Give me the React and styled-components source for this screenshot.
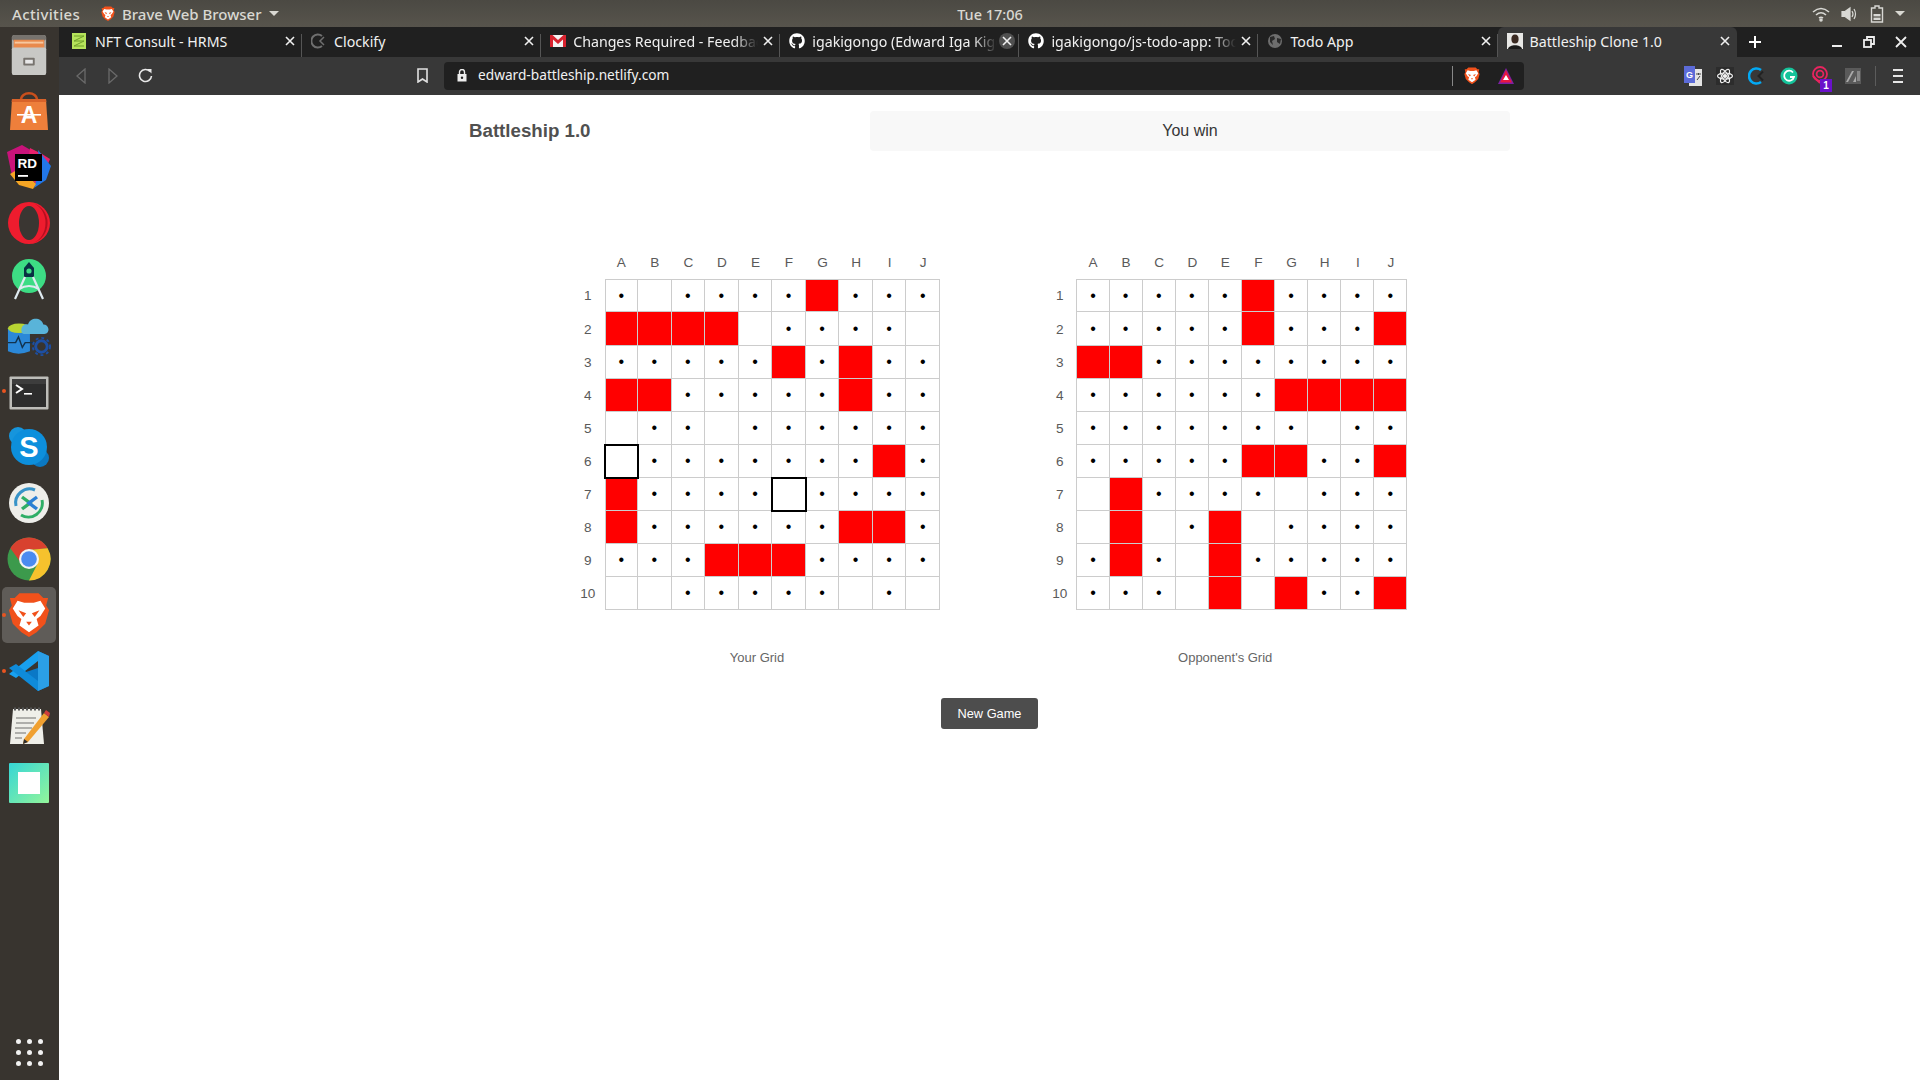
import React from 'react';
import styled, { createGlobalStyle } from 'styled-components';
import { FaGithub } from 'react-icons/fa';

const UI_FONT = '"Noto Sans", "Open Sans", sans-serif';
const PAGE_FONT = '"Liberation Sans", Arial, sans-serif';

const GlobalStyle = createGlobalStyle`
  html, body {
    margin: 0;
    padding: 0;
    width: 1920px;
    height: 1080px;
    overflow: hidden;
    background: #fff;
  }
  * {
    box-sizing: border-box;
  }
`;

// d = dot (a miss), _ = untouched, r = hit, b = black outlined cell
const YOUR_GRID = [
  'd_ddddrddd',
  'rrrr_dddd_',
  'dddddrdrdd',
  'rrdddddrdd',
  '_dd_dddddd',
  'bdddddddrd',
  'rddddbdddd',
  'rddddddrrd',
  'dddrrrdddd',
  '__ddddd_d_',
];

const OPPONENT_GRID = [
  'dddddrdddd',
  'dddddrdddr',
  'rrdddddddd',
  'ddddddrrrr',
  'ddddddd_dd',
  'dddddrrddr',
  '_rdddd_ddd',
  '_r_dr_dddd',
  'drd_rddddd',
  'ddd_r_rddr',
];

const COLUMNS = ['A', 'B', 'C', 'D', 'E', 'F', 'G', 'H', 'I', 'J'];

/* ---------- dock icons ---------- */

const FilesIcon = () => (
  <svg width="40" height="42" viewBox="0 0 42 44">
    <rect x="3" y="1" width="36" height="42" rx="3" fill="#a9a9a6" />
    <rect x="3" y="1" width="36" height="6" rx="3" fill="#77736e" />
    <rect x="5" y="6" width="32" height="9" fill="#e98a4d" />
    <rect x="6" y="8" width="30" height="2" fill="#f7c8a0" />
    <rect x="3" y="14" width="36" height="29" rx="2" fill="#c8c8c5" />
    <rect x="15" y="25" width="12" height="8" rx="1" fill="#77736e" />
    <rect x="17" y="27" width="8" height="4" fill="#e8e8e8" />
  </svg>
);

const StoreIcon = () => (
  <svg width="42" height="42" viewBox="0 0 42 42">
    <path d="M13 10 C13 1 29 1 29 10" fill="none" stroke="#c94f1c" strokeWidth="2.5" />
    <path d="M4 9 H38 L40 40 H2 Z" fill="#ee7f3b" />
    <path d="M4 9 H38 L38.4 12 H3.6 Z" fill="#d9632a" />
    <text x="21" y="33" textAnchor="middle" fontFamily={PAGE_FONT} fontWeight="700" fontSize="23" fill="#fff">A</text>
    <rect x="9" y="24" width="24" height="1.6" fill="#fff" />
  </svg>
);

const RiderIcon = () => (
  <svg width="46" height="46" viewBox="0 0 46 46">
    <polygon points="1,8 16,1 28,8 12,30 6,32" fill="#c9137a" />
    <polygon points="24,4 36,10 44,15 38,30 30,40 20,30" fill="#e8206c" />
    <polygon points="32,6 45,22 40,36 28,44 34,24" fill="#2277e8" />
    <polygon points="4,30 14,24 30,40 27,45 13,41" fill="#f5a524" />
    <rect x="9" y="10" width="27" height="27" fill="#000" />
    <text x="11.5" y="24" fontFamily={PAGE_FONT} fontWeight="700" fontSize="13.5" fill="#fff">RD</text>
    <rect x="12" y="31" width="10" height="1.8" fill="#fff" />
  </svg>
);

const OperaIcon = () => (
  <svg width="44" height="44" viewBox="0 0 44 44">
    <circle cx="22" cy="22" r="21" fill="#ee1c2e" />
    <ellipse cx="22" cy="22" rx="10" ry="17" fill="#3a3632" />
    <path d="M26 2 A21 21 0 0 1 26 42 A18 21 0 0 0 26 2 Z" fill="#b50f20" />
  </svg>
);

const AndroidIcon = () => (
  <svg width="42" height="42" viewBox="0 0 42 42">
    <circle cx="21" cy="18" r="17" fill="#3ddc84" />
    <path d="M16 10 L21 4 L26 10 V19 H16 Z" fill="#083042" />
    <circle cx="21" cy="13" r="2.6" fill="#3ddc84" />
    <path d="M17 19 L7 41 M25 19 L35 41 M11 31 Q21 25 31 31" stroke="#dfeaf0" strokeWidth="2.2" fill="none" />
  </svg>
);

const AzureIcon = () => (
  <svg width="44" height="44" viewBox="0 0 46 46">
    <path d="M1 16 H24 V40 Q12 45 1 40 Z" fill="#2b88d8" />
    <ellipse cx="12.5" cy="16" rx="11.5" ry="5" fill="#b8d432" />
    <path d="M15 18 C15 12 20 11 22 12 C24 4 36 4 38 12 C44 12 46 21 39 22 H18 C16 22 15 20 15 18 Z" fill="#59b4d9" />
    <path d="M1 31 H9 L12 25 L16 36 L19 31 H28" stroke="#12324d" strokeWidth="1.5" fill="none" />
    <circle cx="36" cy="35" r="6" fill="none" stroke="#1d4fa3" strokeWidth="3" />
    <circle cx="36" cy="35" r="9" fill="none" stroke="#1d4fa3" strokeWidth="2" strokeDasharray="3 3" />
  </svg>
);

const TerminalIcon = () => (
  <svg width="40" height="38" viewBox="0 -4 40 38">
    <rect x="0.5" y="0.5" width="39" height="33" rx="1" fill="#bdbdb9" />
    <rect x="3" y="3" width="34" height="28" fill="#2d2d2d" />
    <rect x="3" y="3" width="34" height="5" fill="#3d3d3d" />
    <path d="M7 9 L13 13 L7 17" stroke="#fff" strokeWidth="2" fill="none" />
    <rect x="15" y="17" width="8" height="1.6" fill="#fff" />
  </svg>
);

const SkypeIcon = () => (
  <svg width="42" height="42" viewBox="0 0 42 42">
    <circle cx="10" cy="10" r="9" fill="#1695dd" />
    <circle cx="32" cy="32" r="9" fill="#0a78c2" />
    <circle cx="21" cy="21" r="18" fill="#0d8fdc" />
    <text x="21" y="31" textAnchor="middle" fontFamily={PAGE_FONT} fontWeight="700" fontSize="29" fill="#fff">S</text>
  </svg>
);

const RemoteIcon = () => (
  <svg width="42" height="42" viewBox="0 0 42 42">
    <circle cx="21" cy="21" r="20" fill="#eeeeea" />
    <path d="M8 24 A14 14 0 0 1 27 8" fill="none" stroke="#3793c8" strokeWidth="3" />
    <path d="M34 18 A14 14 0 0 1 13 33" fill="none" stroke="#2fae66" strokeWidth="3" />
    <path d="M14 15 L22 21 L14 27" fill="none" stroke="#2fae66" strokeWidth="3.4" />
    <path d="M29 15 L21 21 L29 27" fill="none" stroke="#2b7fd4" strokeWidth="3.4" />
  </svg>
);

const ChromeIcon = () => (
  <svg width="44" height="44" viewBox="0 0 44 44">
    <circle cx="22" cy="22" r="21.5" fill="#3c9a4c" />
    <path d="M3.4 11.2 A21.5 21.5 0 0 1 40.6 11.2 L22 13 Z M3.4 11.2 L14 26 L22 13 Z" fill="#d8412f" />
    <path d="M40.6 11.2 A21.5 21.5 0 0 1 22 43.5 L30 28 L22 13 Z" fill="#f6c22d" />
    <circle cx="22" cy="22" r="10" fill="#f3f3f3" />
    <circle cx="22" cy="22" r="7.8" fill="#4b8bf0" />
  </svg>
);

const BraveLogo = ({ size }) => (
  <svg width={size} height={size * 1.1} viewBox="0 0 44 48">
    <path d="M12 1 H32 L37 6 L42 6 L40 14 L43 19 L39 33 L30 42 L22 47 L14 42 L5 33 L1 19 L4 14 L2 6 L7 6 Z" fill="#f1511b" />
    <path d="M10 9 L17 11 H27 L34 9 L39 17 L34 25 L30 28 L32 35 L22 42 L12 35 L14 28 L10 25 L5 17 Z" fill="#fff" />
    <path d="M11 19 L19 22 L16 26 Z M33 19 L25 22 L28 26 Z M19 31 H25 L22 35 Z" fill="#f1511b" />
  </svg>
);

const VsCodeIcon = () => (
  <svg width="42" height="42" viewBox="0 0 42 42">
    <path d="M30 1 L41 6 V36 L30 41 L12 24 L30 18 Z" fill="#0a78c6" />
    <path d="M30 1 L41 6 V36 L30 41 V1 Z" fill="#2b9fe6" />
    <path d="M30 1 V11 L8 28 L1 24 Z" fill="#18a0ef" />
    <path d="M30 41 V31 L8 14 L1 18 Z" fill="#0f8bda" />
  </svg>
);

const NotepadIcon = () => (
  <svg width="42" height="42" viewBox="0 0 42 42">
    <path d="M5 3 H33 L36 38 H2 Z" fill="#efefe9" />
    <path d="M6 3 H33" stroke="#555" strokeWidth="3" strokeDasharray="2 2" />
    <path d="M8 12 H28 M8 17 H26 M7 22 H24 M7 27 H18 M7 32 H14" stroke="#9b9b96" strokeWidth="1.4" />
    <path d="M16 33 L36 7 L41 11 L20 36 L15 38 Z" fill="#f0a030" />
    <path d="M36 7 L38 4 L42 7 L41 11 Z" fill="#d13c3c" />
    <path d="M16 33 L15 38 L20 36 Z" fill="#2e2e2e" />
  </svg>
);

const MintIcon = () => (
  <svg width="40" height="40" viewBox="0 0 40 40">
    <defs>
      <linearGradient id="mint" x1="0" y1="0" x2="1" y2="1">
        <stop offset="0" stopColor="#35d6d6" />
        <stop offset="1" stopColor="#93f59a" />
      </linearGradient>
    </defs>
    <rect width="40" height="40" rx="1" fill="url(#mint)" />
    <rect x="9" y="9" width="22" height="22" fill="#fff" />
  </svg>
);

const DOCK_APPS = [
  { key: 'files', icon: <FilesIcon /> },
  { key: 'store', icon: <StoreIcon /> },
  { key: 'rider', icon: <RiderIcon /> },
  { key: 'opera', icon: <OperaIcon /> },
  { key: 'android', icon: <AndroidIcon /> },
  { key: 'azure', icon: <AzureIcon /> },
  { key: 'terminal', icon: <TerminalIcon />, running: true },
  { key: 'skype', icon: <SkypeIcon /> },
  { key: 'remote', icon: <RemoteIcon /> },
  { key: 'chrome', icon: <ChromeIcon /> },
  { key: 'brave', icon: <BraveLogo size={42} />, running: true, active: true },
  { key: 'vscode', icon: <VsCodeIcon />, running: true },
  { key: 'notepad', icon: <NotepadIcon /> },
  { key: 'mint', icon: <MintIcon /> },
];

/* ---------- tab favicons ---------- */

const NftFavicon = () => (
  <svg width="15" height="16" viewBox="0 0 15 16">
    <rect width="14" height="16" fill="#b6e35b" />
    <path d="M2 3 H12 L2 8 H12 L2 13 H12" stroke="#6f9e2a" strokeWidth="1" fill="none" />
  </svg>
);

const ClockifyFavicon = () => (
  <svg width="16" height="16" viewBox="0 0 16 16">
    <path d="M11 3 A6.5 6.5 0 1 0 11 13" fill="none" stroke="#6f6f6f" strokeWidth="2" />
    <path d="M13 4 L9 8 L13 12" fill="none" stroke="#6f6f6f" strokeWidth="1.5" />
  </svg>
);

const GmailFavicon = () => (
  <svg width="16" height="14" viewBox="0 0 16 14">
    <rect y="1" width="16" height="12" fill="#f4f4f4" />
    <path d="M0 1 H2.5 L8 6 L13.5 1 H16 V13 H13 V5.5 L8 10 L3 5.5 V13 H0 Z" fill="#d8232f" />
  </svg>
);

const GlobeFavicon = () => (
  <svg width="16" height="16" viewBox="0 0 16 16">
    <circle cx="8" cy="8" r="7" fill="#6e6e6e" />
    <path d="M3 4 L7 3 L8 6 L5 8 L6 12 L3 9 Z M10 5 L14 6 L13 11 L10 9 Z" fill="#2a2a2a" />
  </svg>
);

const PersonFavicon = () => (
  <svg width="16" height="16" viewBox="0 0 16 16">
    <rect width="16" height="16" fill="#e8e8e6" />
    <ellipse cx="8" cy="6" rx="3.6" ry="4.5" fill="#3a2a22" />
    <path d="M1 16 C2 11 14 11 15 16 Z" fill="#1b1b1b" />
  </svg>
);

const GithubFavicon = styled(FaGithub)`
  width: 16px;
  height: 16px;
  color: #fff;
`;

const TABS = [
  { key: 1, title: 'NFT Consult - HRMS', icon: <NftFavicon /> },
  { key: 2, title: 'Clockify', icon: <ClockifyFavicon /> },
  { key: 3, title: 'Changes Required - Feedback', icon: <GmailFavicon />, fade: true },
  { key: 4, title: 'igakigongo (Edward Iga Kigongo)', icon: <GithubFavicon />, fade: true, hover: true },
  { key: 5, title: 'igakigongo/js-todo-app: Todo App', icon: <GithubFavicon />, fade: true },
  { key: 6, title: 'Todo App', icon: <GlobeFavicon /> },
  { key: 7, title: 'Battleship Clone 1.0', icon: <PersonFavicon />, active: true },
];

/* ---------- small toolbar glyphs ---------- */

const Line = ({ w = 16, h = 16, children, color = '#e6e6e6', sw = 1.5 }) => (
  <svg width={w} height={h} viewBox={`0 0 ${w} ${h}`} fill="none" stroke={color} strokeWidth={sw}>
    {children}
  </svg>
);

const TranslateIcon = () => (
  <svg width="18" height="20" viewBox="0 0 18 20">
    <rect x="5" y="3" width="13" height="17" fill="#e4e4e4" />
    <rect width="11" height="17" fill="#5c6bd8" />
    <text x="5.5" y="12" textAnchor="middle" fontFamily={PAGE_FONT} fontWeight="700" fontSize="9" fill="#fff">G</text>
    <path d="M12 8 H17 M14.5 7 V9 M13 14 L16 10" stroke="#444" strokeWidth="1" />
  </svg>
);

const ReactIcon = () => (
  <svg width="18" height="18" viewBox="0 0 18 18" fill="none" stroke="#f0f0f0" strokeWidth="1.2">
    <rect x="0" y="0" width="18" height="18" fill="#2c2c2c" stroke="none" />
    <ellipse cx="9" cy="9" rx="7.5" ry="3" />
    <ellipse cx="9" cy="9" rx="7.5" ry="3" transform="rotate(60 9 9)" />
    <ellipse cx="9" cy="9" rx="7.5" ry="3" transform="rotate(120 9 9)" />
    <circle cx="9" cy="9" r="1.5" fill="#f0f0f0" />
  </svg>
);

const ClockifyExt = () => (
  <svg width="18" height="18" viewBox="0 0 18 18">
    <path d="M13 3 A7.5 7.5 0 1 0 13 15" fill="none" stroke="#03a9f4" strokeWidth="2.6" />
    <path d="M15 4.5 L10.5 9 L15 13.5" fill="none" stroke="#222" strokeWidth="2" />
  </svg>
);

const GrammarlyExt = () => (
  <svg width="18" height="18" viewBox="0 0 18 18">
    <circle cx="9" cy="9" r="8.5" fill="#15c39a" />
    <path d="M13 5.5 A5 5 0 1 0 14 10 H10" fill="none" stroke="#fff" strokeWidth="1.8" />
  </svg>
);

const PinkExt = () => (
  <svg width="20" height="20" viewBox="0 0 20 20" fill="none" stroke="#e8245f" strokeWidth="1.8">
    <circle cx="9" cy="8" r="7" />
    <circle cx="9" cy="8" r="3.4" />
    <path d="M2 10 L9 17" />
  </svg>
);

const GrayExt = () => (
  <svg width="16" height="16" viewBox="0 0 16 16">
    <rect width="16" height="16" fill="#5a5a5a" />
    <path d="M1 14 L7 3 H9 L3 14 Z M8 14 L11 8 V14 Z" fill="#aaa" />
    <rect x="12" y="3" width="3" height="10" fill="#888" />
  </svg>
);

const EXTENSIONS = [
  { key: 'translate', icon: <TranslateIcon /> },
  { key: 'react', icon: <ReactIcon /> },
  { key: 'clockify', icon: <ClockifyExt /> },
  { key: 'grammarly', icon: <GrammarlyExt /> },
  { key: 'pink', icon: <PinkExt />, badge: '1' },
  { key: 'gray', icon: <GrayExt /> },
];

/* ---------- game board ---------- */

const Board = ({ rows, cellWidth, caption, captionShift }) => (
  <BoardColumn>
    <BoardGrid $cell={cellWidth}>
      <span />
      {COLUMNS.map((c) => (
        <AxisLabel key={c}>{c}</AxisLabel>
      ))}
      {rows.map((row, y) => (
        <React.Fragment key={y}>
          <AxisLabel>{y + 1}</AxisLabel>
          {row.split('').map((kind, x) => (
            <Cell key={x} $kind={kind} $firstRow={y === 0} $firstCol={x === 0}>
              {kind === 'd' ? '•' : ''}
            </Cell>
          ))}
        </React.Fragment>
      ))}
    </BoardGrid>
    <Caption $shift={captionShift}>{caption}</Caption>
  </BoardColumn>
);

const App = () => (
  <Screen>
    <GlobalStyle />
    <TopBar>
      <TopLeft>
        <Activities>Activities</Activities>
        <AppMenu>
          <BraveLogo size={14} />
          Brave Web Browser
          <Caret />
        </AppMenu>
      </TopLeft>
      <Clock>Tue 17:06</Clock>
      <TopRight>
        <Line w={18} h={16} color="#d8d8d4" sw={1.6}>
          <path d="M1 6 Q9 -1 17 6 M4 9 Q9 4.5 14 9 M7 12 Q9 10.5 11 12" />
          <circle cx="9" cy="14" r="1" fill="#d8d8d4" />
        </Line>
        <Line w={18} h={16} color="#d8d8d4" sw={1.2}>
          <path d="M1 5.5 H4 L9 2 V14 L4 10.5 H1 Z" fill="#d8d8d4" />
          <path d="M11 5 Q13 8 11 11 M13 3 Q16 8 13 13" />
        </Line>
        <Line w={14} h={18} color="#d8d8d4" sw={1.4}>
          <path d="M5 1 H9 V3 H12.5 V17 H1.5 V3 H5 Z" />
          <rect x="3.5" y="9" width="7" height="2.4" fill="#d8d8d4" stroke="none" />
          <rect x="3.5" y="12.6" width="7" height="2.4" fill="#d8d8d4" stroke="none" />
        </Line>
        <Caret />
      </TopRight>
    </TopBar>
    <Desktop>
      <Dock>
        {DOCK_APPS.map((app) => (
          <DockItem key={app.key} $active={app.active}>
            {app.running && <RunningDot />}
            {app.icon}
          </DockItem>
        ))}
        <AppGrid>
          {Array.from({ length: 9 }).map((_, i) => (
            <GridDot key={i} />
          ))}
        </AppGrid>
      </Dock>
      <Browser>
        <TabStrip>
          {TABS.map((tab) => (
            <Tab key={tab.key} $active={tab.active}>
              <TabIcon>{tab.icon}</TabIcon>
              <TabTitle $fade={tab.fade}>{tab.title}</TabTitle>
              <TabClose $hover={tab.hover}>
                <Line w={10} h={10} color="#f0f0f0" sw={1.6}>
                  <path d="M1 1 L9 9 M9 1 L1 9" />
                </Line>
              </TabClose>
            </Tab>
          ))}
          <NewTab>
            <Line w={14} h={14} color="#fff" sw={2}>
              <path d="M7 1 V13 M1 7 H13" />
            </Line>
          </NewTab>
          <WindowControls>
            <WindowButton>
              <Line w={12} h={12} color="#eee" sw={2}>
                <path d="M1 10 H11" />
              </Line>
            </WindowButton>
            <WindowButton>
              <Line w={12} h={12} color="#eee" sw={1.8}>
                <rect x="1" y="4" width="7" height="7" fill="#202020" />
                <path d="M4 4 V1 H11 V8 H8" />
              </Line>
            </WindowButton>
            <WindowButton>
              <Line w={12} h={12} color="#eee" sw={1.8}>
                <path d="M1 1 L11 11 M11 1 L1 11" />
              </Line>
            </WindowButton>
          </WindowControls>
        </TabStrip>
        <Toolbar>
          <NavButton>
            <Line w={10} h={16} color="#6a6a6a" sw={1.3}>
              <path d="M9 1 L1 8 L9 15 Z" />
            </Line>
          </NavButton>
          <NavButton>
            <Line w={10} h={16} color="#6a6a6a" sw={1.3}>
              <path d="M1 1 L9 8 L1 15 Z" />
            </Line>
          </NavButton>
          <NavButton>
            <Line w={15} h={15} color="#e8e8e8" sw={1.6}>
              <path d="M12 3.5 A6 6 0 1 0 13.5 8" />
              <path d="M9 1 L13.5 1 L13.5 5.5 Z" fill="#e8e8e8" stroke="none" />
            </Line>
          </NavButton>
          <BookmarkButton>
            <Line w={11} h={15} color="#e0e0e0" sw={1.6}>
              <path d="M1 1 H10 V14 L5.5 11 L1 14 Z" />
            </Line>
          </BookmarkButton>
          <UrlBar>
            <UrlLeft>
              <Line w={10} h={13} color="#eee" sw={1.4}>
                <rect x="0.5" y="5" width="9" height="7.5" fill="#eee" stroke="none" />
                <path d="M2.5 5 V3 A2.5 2.5 0 0 1 7.5 3 V5" />
                <circle cx="5" cy="8.7" r="1.2" fill="#222" stroke="none" />
              </Line>
              <UrlText>edward-battleship.netlify.com</UrlText>
            </UrlLeft>
            <UrlRight>
              <UrlDivider />
              <BraveLogo size={16} />
              <svg width="18" height="18" viewBox="0 0 18 18">
                <polygon points="9,1 17,17 1,17" fill="#7b1fa2" />
                <polygon points="9,3 15,15.5 3,15.5" fill="#e8173f" />
                <polygon points="9,8 12,13 6,13" fill="#fff" />
              </svg>
            </UrlRight>
          </UrlBar>
          <Extensions>
            {EXTENSIONS.map((ext) => (
              <ExtButton key={ext.key}>
                {ext.icon}
                {ext.badge && <ExtBadge>{ext.badge}</ExtBadge>}
              </ExtButton>
            ))}
          </Extensions>
          <ToolbarDivider />
          <MenuButton>
            <MenuBar />
            <MenuBar />
            <MenuBar />
          </MenuButton>
        </Toolbar>
        <Page>
          <PageHeader>
            <Title>Battleship 1.0</Title>
            <Message>You win</Message>
          </PageHeader>
          <Boards>
            <Board rows={YOUR_GRID} cellWidth={33.55} caption="Your Grid" captionShift={3} />
            <Board rows={OPPONENT_GRID} cellWidth={33.1} caption="Opponent's Grid" captionShift={0} />
          </Boards>
          <Actions>
            <NewGameButton>New Game</NewGameButton>
          </Actions>
        </Page>
      </Browser>
    </Desktop>
  </Screen>
);

const Screen = styled.div`
  display: flex;
  flex-direction: column;
  width: 1920px;
  height: 1080px;
  overflow: hidden;
  font-family: ${UI_FONT};
`;

const TopBar = styled.header`
  display: flex;
  align-items: center;
  flex: 0 0 27px;
  padding: 0 12px;
  background: linear-gradient(#4b4943, #57544c);
  color: #d9d8d2;
  font-size: 15px;
  font-weight: 500;
`;

const TopLeft = styled.div`
  display: flex;
  align-items: center;
  gap: 21px;
  width: 945px;
`;

const Activities = styled.span`
  width: 68px;
  letter-spacing: 0.35px;
  white-space: nowrap;
`;

const AppMenu = styled.div`
  display: flex;
  align-items: center;
  gap: 7px;
`;

const Caret = styled.span`
  width: 0;
  height: 0;
  border-left: 5px solid transparent;
  border-right: 5px solid transparent;
  border-top: 5px solid #d9d8d2;
`;

const Clock = styled.div`
  width: 66px;
  font-size: 14.5px;
  text-align: center;
  white-space: nowrap;
`;

const TopRight = styled.div`
  display: flex;
  align-items: center;
  gap: 11px;
  margin-left: auto;
  padding-right: 3px;
`;

const Desktop = styled.div`
  display: flex;
  flex: 1;
  min-height: 0;
`;

const Dock = styled.nav`
  display: flex;
  flex-direction: column;
  flex: 0 0 59px;
  background: #38342f;
`;

const DockItem = styled.div`
  position: relative;
  display: flex;
  align-items: center;
  justify-content: center;
  flex: 0 0 56px;
  margin: 0 3px 0 2px;
  border-radius: 5px;
  background: ${(props) => (props.$active ? 'rgba(255, 255, 255, 0.2)' : 'transparent')};
`;

const RunningDot = styled.span`
  position: absolute;
  left: 0;
  top: 26px;
  width: 4px;
  height: 4px;
  border-radius: 50%;
  background: #e95420;
`;

const AppGrid = styled.div`
  display: grid;
  grid-template-columns: repeat(3, 5px);
  gap: 6px;
  justify-content: center;
  margin-top: auto;
  padding-bottom: 14px;
`;

const GridDot = styled.span`
  width: 5px;
  height: 5px;
  border-radius: 50%;
  background: #f2f2f2;
`;

const Browser = styled.div`
  display: flex;
  flex-direction: column;
  flex: 1;
  min-width: 0;
`;

const TabStrip = styled.div`
  display: flex;
  flex: 0 0 30px;
  padding-left: 4px;
  background: #202020;
`;

const Tab = styled.div`
  position: relative;
  display: flex;
  align-items: center;
  flex: 0 0 239.1px;
  min-width: 0;
  padding: 0 4px 2px 9px;
  border-radius: ${(props) => (props.$active ? '6px 6px 0 0' : '0')};
  background: ${(props) => (props.$active ? '#383838' : 'transparent')};
  color: #f1f1f1;
  font-size: 14.2px;
  &::after {
    content: '';
    position: absolute;
    right: 0;
    top: 7px;
    bottom: 0;
    width: 1px;
    background: ${(props) => (props.$active ? 'transparent' : '#555')};
  }
`;

const TabIcon = styled.span`
  display: flex;
  align-items: center;
  flex: 0 0 23px;
`;

const TabTitle = styled.span`
  flex: 1;
  min-width: 0;
  overflow: hidden;
  white-space: nowrap;
  ${(props) =>
    props.$fade &&
    'mask-image: linear-gradient(to right, #000 calc(100% - 24px), transparent);'}
`;

const TabClose = styled.span`
  display: flex;
  align-items: center;
  justify-content: center;
  flex: 0 0 16px;
  height: 16px;
  margin-left: 2px;
  border-radius: 50%;
  background: ${(props) => (props.$hover ? '#505050' : 'transparent')};
`;

const NewTab = styled.div`
  display: flex;
  align-items: center;
  justify-content: center;
  flex: 0 0 36px;
`;

const WindowControls = styled.div`
  display: flex;
  align-items: center;
  margin-left: auto;
  padding-right: 3px;
`;

const WindowButton = styled.div`
  display: flex;
  align-items: center;
  justify-content: center;
  width: 32px;
`;

const Toolbar = styled.div`
  display: flex;
  align-items: center;
  flex: 0 0 38px;
  padding-left: 6px;
  padding-bottom: 1px;
  background: #383838;
`;

const NavButton = styled.div`
  display: flex;
  align-items: center;
  justify-content: center;
  width: 32px;
`;

const BookmarkButton = styled(NavButton)`
  margin-left: 245px;
`;

const UrlBar = styled.div`
  display: flex;
  align-items: center;
  justify-content: space-between;
  width: 1080px;
  height: 28px;
  margin-left: 6px;
  padding: 0 9px 0 13px;
  border-radius: 4px;
  background: #202020;
`;

const UrlLeft = styled.div`
  display: flex;
  align-items: center;
  gap: 11px;
`;

const UrlText = styled.span`
  position: relative;
  top: -1px;
  color: #f1f1f1;
  font-size: 13.7px;
`;

const UrlRight = styled.div`
  display: flex;
  align-items: center;
  gap: 17px;
`;

const UrlDivider = styled.span`
  width: 1px;
  height: 20px;
  margin-right: -6px;
  background: #888;
`;

const Extensions = styled.div`
  display: flex;
  margin-left: 153px;
`;

const ExtButton = styled.div`
  position: relative;
  display: flex;
  align-items: center;
  justify-content: center;
  width: 32px;
  height: 28px;
`;

const ExtBadge = styled.span`
  position: absolute;
  right: 5px;
  bottom: -2px;
  width: 12px;
  height: 13px;
  background: #6a11cb;
  color: #fff;
  font-family: ${PAGE_FONT};
  font-size: 10px;
  font-weight: 700;
  line-height: 13px;
  text-align: center;
`;

const ToolbarDivider = styled.span`
  width: 1px;
  height: 20px;
  margin-left: 6px;
  background: #5c5c5c;
`;

const MenuButton = styled.div`
  display: flex;
  flex-direction: column;
  align-items: center;
  gap: 4px;
  width: 32px;
  margin-left: 6px;
`;

const MenuBar = styled.span`
  width: 10px;
  height: 2px;
  background: #e6e6e6;
`;

const Page = styled.main`
  flex: 1;
  background: #fff;
  color: #4a4a4a;
  font-family: ${PAGE_FONT};
`;

const PageHeader = styled.div`
  display: flex;
  align-items: center;
  height: 40px;
  margin-top: 16px;
  padding-left: 410px;
`;

const Title = styled.h1`
  width: 401px;
  margin: 0;
  font-size: 18.7px;
  font-weight: 700;
  color: #505050;
`;

const Message = styled.div`
  width: 640px;
  height: 40px;
  border-radius: 4px;
  background: #f8f8f8;
  color: #363636;
  font-size: 16px;
  line-height: 39px;
  text-align: center;
`;

const Boards = styled.div`
  display: flex;
  gap: 103px;
  margin-top: 95.4px;
  padding-left: 512px;
`;

const BoardColumn = styled.section`
  display: flex;
  flex-direction: column;
`;

const BoardGrid = styled.div`
  display: grid;
  grid-template-columns: 33.5px repeat(10, ${(props) => props.$cell}px);
  grid-template-rows: 33px repeat(10, 33.1px);
`;

const AxisLabel = styled.span`
  display: flex;
  align-items: center;
  justify-content: center;
  color: #5a5a5a;
  font-size: 13.6px;
`;

const Cell = styled.div`
  display: flex;
  align-items: center;
  justify-content: center;
  border-right: 1px solid #ccc;
  border-bottom: 1px solid #ccc;
  border-top: ${(props) => (props.$firstRow ? '1px solid #ccc' : '0')};
  border-left: ${(props) => (props.$firstCol ? '1px solid #ccc' : '0')};
  background: ${(props) => (props.$kind === 'r' ? '#ff0000' : '#fff')};
  color: #000;
  font-size: 16px;
  line-height: 1;
  ${(props) =>
    props.$kind === 'b' &&
    `
    position: relative;
    z-index: 1;
    outline: 2px solid #000;
    outline-offset: -1px;
  `}
`;

const Caption = styled.div`
  margin-top: 39.6px;
  padding-left: ${(props) => props.$shift}px;
  color: #666;
  font-size: 13px;
  line-height: 16px;
  text-align: center;
`;

const Actions = styled.div`
  display: flex;
  justify-content: center;
  margin-top: 32px;
`;

const NewGameButton = styled.button`
  width: 97px;
  height: 31px;
  padding: 0;
  border: 0;
  border-radius: 3px;
  background: #4d4d4d;
  color: #fff;
  font-family: ${PAGE_FONT};
  font-size: 12.8px;
`;

export default App;
